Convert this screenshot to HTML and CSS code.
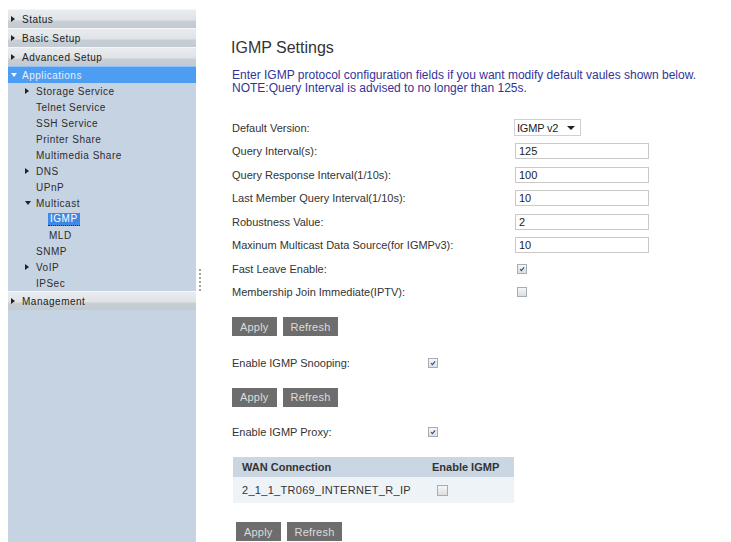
FILE: index.html
```html
<!DOCTYPE html>
<html lang="en">
<head>
<meta charset="utf-8">
<title>IGMP Settings</title>
<link rel="stylesheet" href="styles.css">
</head>
<body>
<div class="page">
  <nav class="sidebar">
    <div class="menu-head"><span class="tri-r"></span>Status</div>
    <div class="menu-head"><span class="tri-r"></span>Basic Setup</div>
    <div class="menu-head"><span class="tri-r"></span>Advanced Setup</div>
    <div class="menu-head open"><span class="tri-d"></span>Applications</div>
    <ul class="submenu">
      <li class="item"><span class="tri-r"></span>Storage Service</li>
      <li class="item">Telnet Service</li>
      <li class="item">SSH Service</li>
      <li class="item">Printer Share</li>
      <li class="item">Multimedia Share</li>
      <li class="item"><span class="tri-r"></span>DNS</li>
      <li class="item">UPnP</li>
      <li class="item"><span class="tri-d"></span>Multicast</li>
      <li class="item deep"><span class="current">IGMP</span></li>
      <li class="item deep">MLD</li>
      <li class="item">SNMP</li>
      <li class="item"><span class="tri-r"></span>VoIP</li>
      <li class="item">IPSec</li>
    </ul>
    <div class="menu-head"><span class="tri-r"></span>Management</div>
  </nav>

  <div class="splitter"><span class="grip"></span></div>

  <main class="content">
    <h1 class="title">IGMP Settings</h1>
    <p class="intro">Enter IGMP protocol configuration fields if you want modify default vaules shown below.<br>NOTE:Query Interval is advised to no longer than 125s.</p>

    <div class="form">
      <label>Default Version:</label>
      <div class="select"><span>IGMP v2</span><span class="caret"></span></div>

      <label>Query Interval(s):</label>
      <input class="field" type="text" value="125">

      <label>Query Response Interval(1/10s):</label>
      <input class="field" type="text" value="100">

      <label>Last Member Query Interval(1/10s):</label>
      <input class="field" type="text" value="10">

      <label>Robustness Value:</label>
      <input class="field" type="text" value="2">

      <label>Maxinum Multicast Data Source(for IGMPv3):</label>
      <input class="field" type="text" value="10">

      <label>Fast Leave Enable:</label>
      <span class="cb checked"><svg viewBox="0 0 10 10"><path d="M2.6 5.1 L4.3 7 L7.6 2.9"/></svg></span>

      <label>Membership Join Immediate(IPTV):</label>
      <span class="cb"></span>
    </div>

    <div class="btns">
      <button class="btn">Apply</button>
      <button class="btn">Refresh</button>
    </div>

    <div class="toggle-row snoop">
      <label>Enable IGMP Snooping:</label>
      <span class="cb checked"><svg viewBox="0 0 10 10"><path d="M2.6 5.1 L4.3 7 L7.6 2.9"/></svg></span>
    </div>

    <div class="btns second">
      <button class="btn">Apply</button>
      <button class="btn">Refresh</button>
    </div>

    <div class="toggle-row proxy">
      <label>Enable IGMP Proxy:</label>
      <span class="cb checked"><svg viewBox="0 0 10 10"><path d="M2.6 5.1 L4.3 7 L7.6 2.9"/></svg></span>
    </div>

    <table class="wan">
      <thead>
        <tr><th class="c1">WAN Connection</th><th class="c2">Enable IGMP</th></tr>
      </thead>
      <tbody>
        <tr><td class="c1">2_1_1_TR069_INTERNET_R_IP</td><td class="c2"><span class="cb"></span></td></tr>
      </tbody>
    </table>

    <div class="btns last">
      <button class="btn">Apply</button>
      <button class="btn">Refresh</button>
    </div>
  </main>
</div>
</body>
</html>
```
FILE: styles.css
```css
* { box-sizing: border-box; }

html, body {
  margin: 0;
  height: 100%;
  background: #fff;
}

body {
  font-family: "Liberation Sans", Arial, sans-serif;
  color: #333;
}

.page {
  display: flex;
  height: 542px;
  padding: 9px 0 0 8px;
  overflow: hidden;
}

/* ---------- left navigation ---------- */
.sidebar {
  width: 188px;
  flex: none;
  background: #c6d3e3;
  font-size: 10px;
  letter-spacing: 0.5px;
}

.menu-head {
  height: 19px;
  display: flex;
  align-items: center;
  padding-left: 14px;
  color: #222;
  border-top: 1px solid #f4f6f8;
  background: linear-gradient(#e9ecef 0%, #dfe3e7 55%, #c8ced5 62%, #c4cad2 100%);
}

.menu-head.open {
  height: 17px;
  background: #4d9df3;
  border-top-color: #8ec2f8;
  color: #e8f1ff;
}

.tri-r {
  width: 0;
  height: 0;
  border-left: 4px solid #222;
  border-top: 3px solid transparent;
  border-bottom: 3px solid transparent;
  margin-left: -11px;
  margin-right: 7px;
}

.tri-d {
  width: 0;
  height: 0;
  border-top: 4px solid #222;
  border-left: 3px solid transparent;
  border-right: 3px solid transparent;
  margin-left: -11px;
  margin-right: 5px;
}

.menu-head.open .tri-d { border-top-color: #fff; }

.submenu {
  list-style: none;
  margin: 0;
  padding: 0;
}

.item {
  height: 16px;
  display: flex;
  align-items: center;
  padding-left: 28px;
  color: #2c2c2c;
}

.item.deep { padding-left: 41px; }

.current {
  background: #3f88e6;
  color: #fff;
  padding: 0 2px;
  margin-left: -1px;
  line-height: 12px;
  border-bottom: 1px dotted #1d2f55;
}

/* ---------- frame splitter ---------- */
.splitter {
  width: 10px;
  flex: none;
  display: flex;
  flex-direction: column;
}

.grip {
  width: 2px;
  height: 22px;
  margin: 260px 0 0 3px;
  background: repeating-linear-gradient(#a3a3a3 0 2px, transparent 2px 4px);
}

/* ---------- content ---------- */
.content {
  flex: 1;
  padding-left: 26px;
  font-size: 11px;
}

.title {
  margin: 29px 0 0 -1px;
  font-size: 16px;
  line-height: 20px;
  font-weight: normal;
  color: #333;
}

.intro {
  margin: 11px 0 0;
  font-size: 12px;
  line-height: 13px;
  color: #333399;
  white-space: nowrap;
}

.form {
  display: grid;
  grid-template-columns: 283px 134px;
  grid-auto-rows: 23.5px;
  align-items: center;
  margin-top: 21px;
}

.form label,
.toggle-row label { color: #333; }

.field {
  width: 134px;
  height: 16px;
  border: 1px solid #c9c9c9;
  padding: 0 3px;
  font: 11px "Liberation Sans", Arial, sans-serif;
  color: #222;
  background: #fff;
  outline: none;
}

.select {
  width: 67px;
  height: 17px;
  margin-left: -1px;
  border: 1px solid #d0d0d0;
  display: flex;
  align-items: center;
  padding-left: 2px;
  color: #222;
  letter-spacing: -0.2px;
}

.caret {
  width: 0;
  height: 0;
  margin-left: 9px;
  border-top: 4px solid #222;
  border-left: 4px solid transparent;
  border-right: 4px solid transparent;
}

.cb {
  width: 10px;
  height: 10px;
  margin-left: 2px;
  border: 1px solid #a6adb5;
  background: linear-gradient(#f6f6f6, #dedede);
  display: inline-block;
  position: relative;
}

.cb svg {
  width: 8px;
  height: 8px;
  display: block;
}

.cb svg path {
  fill: none;
  stroke: #2f4f92;
  stroke-width: 1.5;
}

.btns {
  display: flex;
  gap: 6px;
  margin-top: 13px;
}

.btns.second { margin-top: 13px; }
.btns.last { margin: 19px 0 0 4px; }

.btn {
  height: 19px;
  padding: 0 8px;
  border: none;
  background: #6d6d6d;
  color: #dcdcdc;
  font: 11px "Liberation Sans", Arial, sans-serif;
  letter-spacing: 0.2px;
}

.toggle-row {
  display: grid;
  grid-template-columns: 194px auto;
  height: 23.5px;
  align-items: center;
  justify-items: start;
}

.toggle-row.snoop { margin-top: 15px; }
.toggle-row.proxy { margin-top: 14px; }

.wan {
  margin: 13px 0 0 1px;
  width: 281px;
  border-collapse: collapse;
  font-size: 11px;
}

.wan th {
  height: 20px;
  background: #cbd6e3;
  text-align: left;
  font-weight: bold;
  color: #333;
  padding: 0 0 0 9px;
}

.wan td {
  height: 26px;
  background: #eef3f8;
  color: #333;
  padding: 0 0 0 9px;
  letter-spacing: 0.3px;
}

.wan .c1 { width: 195px; }
.wan th.c2 { padding-left: 4px; }
.wan td.c2 { padding-left: 7px; }
.wan td .cb { vertical-align: middle; width: 11px; height: 11px; }
```
